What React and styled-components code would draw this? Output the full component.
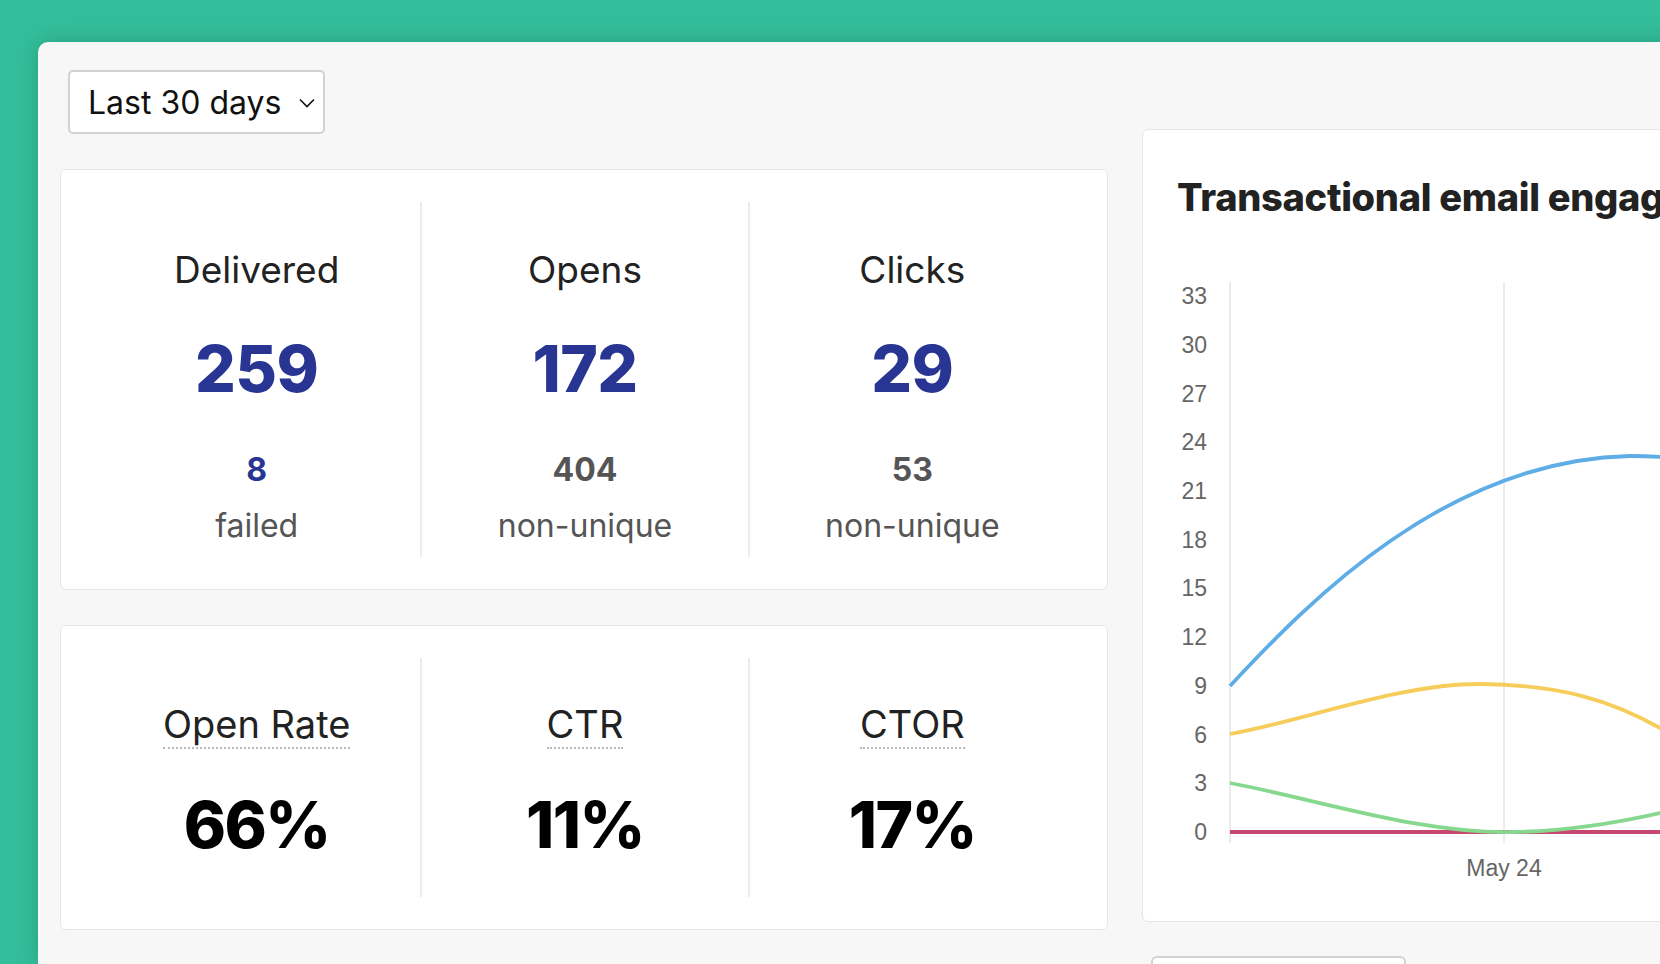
import React from "react";
import styled, { createGlobalStyle } from "styled-components";

const stats = [
  { title: "Delivered", value: 259, sub: 8, subLabel: "failed", subBlue: true },
  { title: "Opens", value: 172, sub: 404, subLabel: "non-unique" },
  { title: "Clicks", value: 29, sub: 53, subLabel: "non-unique" }
];

const rates = [
  { title: "Open Rate", value: "66%" },
  { title: "CTR", value: "11%" },
  { title: "CTOR", value: "17%" }
];

const yTicks = [33, 30, 27, 24, 21, 18, 15, 12, 9, 6, 3, 0];
const zeroY = 572;
const unit = 16.24;

export default function App() {
  return (
    <>
      <GlobalStyle />
      <Page>
        <Panel>
          <LeftCol>
            <Select>
              <span>Last 30 days</span>
              <svg width="16" height="10" viewBox="0 0 16 10">
                <path d="M1 1.5 L8 8.5 L15 1.5" fill="none" stroke="#111" strokeWidth="1.6" />
              </svg>
            </Select>

            <Card>
              {stats.map(s => (
                <Column key={s.title} $bottom={11}>
                  <Title>{s.title}</Title>
                  <BigNumber $blue>{s.value}</BigNumber>
                  <SubNumber $blue={s.subBlue}>{s.sub}</SubNumber>
                  <SubLabel>{s.subLabel}</SubLabel>
                </Column>
              ))}
            </Card>

            <Card>
              {rates.map(r => (
                <Column key={r.title} $bottom={34}>
                  <RateTitle>{r.title}</RateTitle>
                  <BigNumber $rate>{r.value}</BigNumber>
                </Column>
              ))}
            </Card>

            <Card $empty />
          </LeftCol>

          <RightCol>
            <ChartCard>
              <ChartTitle>Transactional email engagement</ChartTitle>
              <Chart width="978" height="640" viewBox="0 0 978 640">
                <line x1="53" y1="22" x2="53" y2="583" stroke="#e6e6e6" strokeWidth="1.5" />
                <line x1="327" y1="22" x2="327" y2="583" stroke="#e6e6e6" strokeWidth="1.5" />
                <line x1="601" y1="22" x2="601" y2="583" stroke="#e6e6e6" strokeWidth="1.5" />
                {yTicks.map(t => (
                  <AxisText key={t} x="30" y={zeroY - t * unit} textAnchor="end" dominantBaseline="central">
                    {t}
                  </AxisText>
                ))}
                <AxisText x="327" y="608" textAnchor="middle" dominantBaseline="central">
                  May 24
                </AxisText>
                <path d="M53 572 L700 572" stroke="#c8476f" strokeWidth="3.8" fill="none" />
                <path
                  d="M53 523 C143 540 243 574 337 572 C393 571 443 562 483 553 C510 547 530 542 560 536"
                  stroke="#86d88f"
                  strokeWidth="3.8"
                  fill="none"
                />
                <path
                  d="M53 474 C123 462 223 423 305 424 C383 425 433 440 483 468 C500 478 520 490 540 502"
                  stroke="#f6cd5b"
                  strokeWidth="3.8"
                  fill="none"
                />
                <path
                  d="M53 426 C133 340 270 200 453 196 C513 196 560 205 600 220"
                  stroke="#5eade6"
                  strokeWidth="3.8"
                  fill="none"
                />
              </Chart>
            </ChartCard>
            <RangeBox />
          </RightCol>
        </Panel>
      </Page>
    </>
  );
}

const GlobalStyle = createGlobalStyle`
  html, body {
    margin: 0;
    padding: 0;
    overflow: hidden;
  }
  body {
    font-family: "Inter", "Noto Sans", sans-serif;
    background: #34bf9c;
  }
  * {
    box-sizing: border-box;
  }
`;

const Page = styled.div`
  width: 1660px;
  height: 964px;
  overflow: hidden;
  background: #34bf9c;
  padding: 42px 0 0 38px;
`;

const Panel = styled.div`
  width: 2200px;
  height: 100%;
  background: #f7f7f7;
  border-top-left-radius: 10px;
  box-shadow: 0 0 24px rgba(0, 60, 40, 0.25);
  padding: 28px 0 0 22px;
  display: grid;
  grid-template-columns: 1048px 1048px;
  column-gap: 34px;
  align-items: start;
`;

const LeftCol = styled.div`
  display: flex;
  flex-direction: column;
  gap: 35px;
`;

const RightCol = styled.div`
  display: flex;
  flex-direction: column;
  gap: 34px;
  padding-top: 59px;
`;

const Select = styled.div`
  margin-left: 8px;
  width: 257px;
  height: 64px;
  background: #fff;
  border: 2px solid #d2d2d2;
  border-radius: 5px;
  display: flex;
  align-items: center;
  justify-content: space-between;
  padding: 0 8px 0 18px;
  font-size: 32px;
  color: #111;

  svg {
    margin-top: 2px;
  }
`;

const Card = styled.div`
  background: #fff;
  border: 1px solid #e6e6e6;
  border-radius: 6px;
  padding: 32px;
  display: grid;
  grid-template-columns: repeat(3, 1fr);
  height: ${p => (p.$empty ? "200px" : "auto")};
`;

const Column = styled.div`
  display: flex;
  flex-direction: column;
  align-items: center;
  padding: 46px 0 ${p => p.$bottom}px;

  & + & {
    border-left: 2px solid #ececec;
  }
`;

const Title = styled.div`
  font-size: 37px;
  line-height: 44px;
  color: #222;
`;

const RateTitle = styled.div`
  font-size: 38px;
  line-height: 40px;
  color: #222;
  padding-bottom: 3px;
  border-bottom: 2px dotted #b8b8b8;
`;

const BigNumber = styled.div`
  font-size: 64px;
  line-height: 76px;
  font-weight: 800;
  letter-spacing: ${p => (p.$rate ? "-1.5px" : "-0.5px")};
  color: ${p => (p.$blue ? "#283593" : "#000")};
  margin-top: ${p => (p.$rate ? "38px" : "39px")};
`;

const SubNumber = styled.div`
  font-size: 32px;
  line-height: 40px;
  font-weight: 700;
  color: ${p => (p.$blue ? "#283593" : "#555")};
  margin-top: 43px;
`;

const SubLabel = styled.div`
  font-size: 32px;
  line-height: 40px;
  color: #555;
  margin-top: 16px;
`;

const ChartCard = styled.div`
  background: #fff;
  border: 1px solid #e6e6e6;
  border-radius: 6px;
  padding: 44px 34px 21px;
  height: 793px;
`;

const ChartTitle = styled.h2`
  margin: 0;
  font-size: 38px;
  line-height: 46px;
  font-weight: 800;
  letter-spacing: -0.3px;
  color: #222;
  white-space: nowrap;
`;

const Chart = styled.svg`
  display: block;
  margin-top: 40px;
  overflow: visible;
`;

const AxisText = styled.text`
  font-family: "Liberation Sans", Arial, sans-serif;
  font-size: 23px;
  fill: #666;
`;

const RangeBox = styled.div`
  margin-left: 9px;
  width: 255px;
  height: 60px;
  background: #fff;
  border: 2px solid #d2d2d2;
  border-radius: 6px;
`;
